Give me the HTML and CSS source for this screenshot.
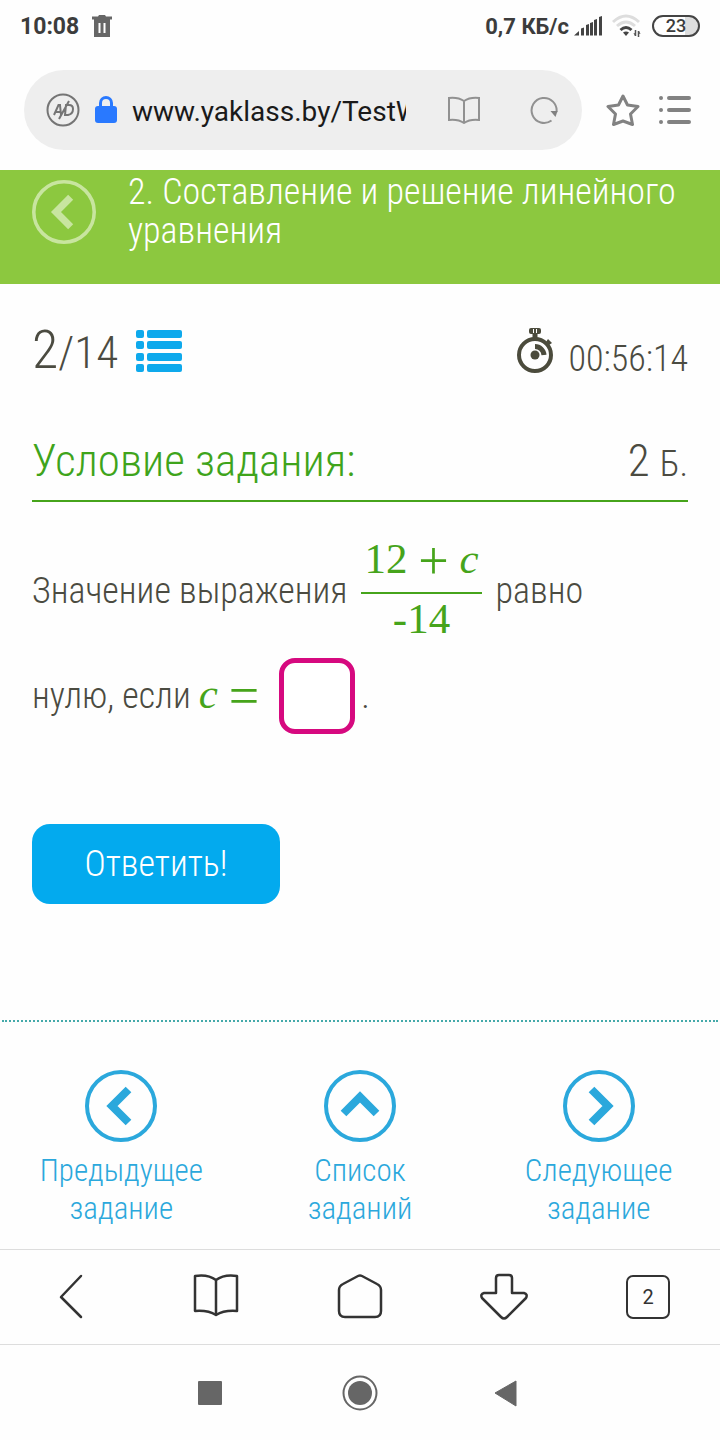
FILE: index.html
```html
<!DOCTYPE html>
<html lang="ru">

<head>
    <meta charset="UTF-8">
    <meta name="viewport" content="width=device-width, initial-scale=1">
    <title>ЯКласс</title>
    <link rel="stylesheet" href="styles.css">
</head>

<body>
    <div class="status-bar">
        <span>10:08</span>
        <svg class="trash" width="20" height="22" viewBox="0 0 20 22">
            <path d="M0 1.500h6l1-1.500h6l1 1.500h6v3H0zM2 4h16v18H2z" fill="#666" />
            <path d="M7.500 8v10M12.500 8v10" stroke="#fff" stroke-width="2" />
        </svg>
        <span class="speed">0,7 КБ/с</span>
        <svg class="signal" width="28" height="20" viewBox="0 0 28 20" fill="#444">
            <path d="M0 19.500L5 15v4.500zM7 12.500l3-1v8H7zM12 9l3-1v11.500h-3zM16 7l3-1v13.500h-3zM20 4l3-1v16.500h-3zM25 1l3-1v19.500h-3z" />
        </svg>
        <svg class="wifi" width="30" height="24" viewBox="0 0 30 24" fill="none" stroke-width="3">
            <path d="M1 8q13-12 26 0M5 12q9-8 18 0" stroke="#ddd" />
            <path d="M8.500 16q5.500-5 11 0" stroke="#444" />
            <path d="M11 18.500q3-2 6 0l-3 3.500z" fill="#444" />
            <path d="M23.500 16v6M26.500 17v6" stroke="#555" stroke-width="1.500" />
            <path d="M22 19l1.500 3M28 20l-1.500-3" stroke="#555" stroke-width="1" />
        </svg>
        <span class="battery">23</span>
    </div>

    <div class="browser-bar">
        <div class="address">
            <svg width="34" height="34" viewBox="0 0 34 34" fill="none" stroke="#757575" stroke-width="2">
                <circle cx="17" cy="17" r="15.500" />
                <path d="M8 22l4.500-10h1.500l1 10M9.500 19h6M20 12l-1 10h3q5-1 5-6q0-4-4-4zM23 8L13 26" />
            </svg>
            <svg class="lock" width="22" height="28" viewBox="0 0 22 28">
                <path d="M5.500 12V7a5.500 5.500 0 0 1 11 0v5" fill="none" stroke="#2979ff" stroke-width="3" />
                <rect y="10" width="22" height="17" rx="3" fill="#2979ff" />
            </svg>
            <input class="url" type="text" value="www.yaklass.by/TestWork" aria-label="Адрес">
            <button class="icon-btn" aria-label="Режим чтения">
                <svg width="32" height="28" viewBox="0 0 32 28" fill="none" stroke="#919191" stroke-width="2">
                    <path d="M1 2q9-1 15 3q6-4 15-3v22q-9-1-15 3q-6-4-15-3zM16 5v22" />
                </svg>
            </button>
            <button class="icon-btn reload" aria-label="Обновить">
                <svg width="28" height="28" viewBox="0 0 28 28">
                    <path d="M26.500 16a12.500 12.500 0 1 0-5 8.500" fill="none" stroke="#919191" stroke-width="2" />
                    <path d="M20.500 15h7l-2 6z" fill="#808080" />
                </svg>
            </button>
        </div>
        <button class="icon-btn" aria-label="В закладки">
            <svg width="34" height="34" viewBox="0 0 34 34" fill="none" stroke="#828282" stroke-width="3" stroke-linejoin="round">
                <path d="M17 3l4.500 9L32 13.500l-7.500 7.500L26.500 31.500L17 28L7.500 31.500L9.500 21L2 13.500L12.500 12z" />
            </svg>
        </button>
        <button class="icon-btn" aria-label="Меню">
            <svg width="34" height="30" viewBox="0 0 34 30" stroke="#828282" stroke-width="4" stroke-linecap="round">
                <path d="M3 3h0.010M3 15h0.010M3 27h0.010M11 3h20M11 15h20M11 27h20" />
            </svg>
        </button>
    </div>

    <header class="header">
        <a class="back" href="#" aria-label="Назад">
            <svg width="64" height="64" viewBox="0 0 72 72" fill="none" stroke="currentColor">
                <circle cx="36" cy="36" r="34" stroke-width="4" />
                <path d="M43.500 19.500L27 36L43.500 52.500" stroke-width="8" />
            </svg>
        </a>
        <h1>2. Составление и решение линейного уравнения</h1>
    </header>

    <main class="content">
        <div class="progress">
            <div class="counter"><span class="current">2</span>/14</div>
            <svg width="46" height="42" viewBox="0 0 46 42" fill="#0ea9ec">
                <rect width="8" height="8" rx="2" />
                <rect x="11" width="35" height="8" rx="2" />
                <rect y="11" width="8" height="8" rx="2" />
                <rect x="11" y="11" width="35" height="8" rx="2" />
                <rect y="23" width="8" height="8" rx="2" />
                <rect x="11" y="23" width="35" height="8" rx="2" />
                <rect y="34" width="8" height="8" rx="2" />
                <rect x="11" y="34" width="35" height="8" rx="2" />
            </svg>
            <div class="timer">
                <svg width="36" height="46" viewBox="0 0 36 46">
                    <circle cx="18" cy="27" r="16" fill="none" stroke="#4b4b3c" stroke-width="4" />
                    <path d="M15.500 5h5v6h-5zM29 14l2-3l4 4l-3 2z" fill="#4b4b3c" />
                    <rect x="12" y="0" width="12" height="6" rx="2" fill="#4b4b3c" />
                    <path d="M16.500 1v4M19.500 1v4" stroke="#fff" />
                    <circle cx="18" cy="27" r="4.500" fill="#4b4b3c" />
                    <path d="M18 18.500a9 9 0 0 1 9 8.500" fill="none" stroke="#4b4b3c" stroke-width="5" />
                </svg>
                <span class="time">00:56:14</span>
            </div>
        </div>

        <div class="task-head">
            <h2>Условие задания:</h2>
            <div class="points">2 <small>Б.</small></div>
        </div>

        <form class="task">
            <div class="task-line">
                <span>Значение выражения</span>
                <span class="fraction">
                    <span class="top">12 <span class="sign">+</span> <i>c</i></span>
                    <span class="bottom">-14</span>
                </span>
                <span>равно</span>
            </div>
            <div class="task-line second">
                <label for="answer">нулю, если <span class="math"><i>c</i> <span class="sign">=</span></span></label>
                <input class="answer" id="answer" type="text">
                <span>.</span>
            </div>
            <button class="submit" type="button">Ответить!</button>
        </form>
    </main>

    <nav class="task-nav">
        <a href="#">
            <svg width="72" height="72" viewBox="0 0 72 72" fill="none" stroke="currentColor">
                <circle cx="36" cy="36" r="34" stroke-width="4" />
                <path d="M43.500 19.500L27 36L43.500 52.500" stroke-width="8" />
            </svg>
            <span>Предыдущее задание</span>
        </a>
        <a href="#">
            <svg width="72" height="72" viewBox="0 0 72 72" fill="none" stroke="currentColor">
                <circle cx="36" cy="36" r="34" stroke-width="4" />
                <path d="M19.500 43.500L36 27L52.500 43.500" stroke-width="8" />
            </svg>
            <span>Список заданий</span>
        </a>
        <a href="#">
            <svg width="72" height="72" viewBox="0 0 72 72" fill="none" stroke="currentColor">
                <circle cx="36" cy="36" r="34" stroke-width="4" />
                <path d="M28.500 19.500L45 36L28.500 52.500" stroke-width="8" />
            </svg>
            <span>Следующее задание</span>
        </a>
    </nav>

    <div class="toolbar">
        <button aria-label="Назад">
            <svg width="48" height="48" viewBox="0 0 48 48">
                <path d="M33 3L13 24L33 44" />
            </svg>
        </button>
        <button aria-label="Закладки">
            <svg width="48" height="48" viewBox="0 0 48 48">
                <path d="M3 3q13-2 21 4q8-6 21-4v35q-13-1-21 4q-8-5-21-4zM24 7v35" />
            </svg>
        </button>
        <button aria-label="Домой">
            <svg width="48" height="48" viewBox="0 0 48 48">
                <path d="M22 3q2-1 4 0l15 8q4 2 4 6v21q0 6-6 6H9q-6 0-6-6V17q0-4 4-6z" />
            </svg>
        </button>
        <button aria-label="Загрузки">
            <svg width="48" height="48" viewBox="0 0 48 48">
                <path d="M16 20V5q0-3 3-3h10q3 0 3 3v15h12q4 1 2 5L27 44q-3 3-6 0L2 25q-2-4 2-5z" />
            </svg>
        </button>
        <button aria-label="Вкладки"><span class="tabs">2</span></button>
    </div>

    <div class="system-nav">
        <button aria-label="Недавние">
            <svg width="36" height="36" viewBox="0 0 36 36">
                <rect x="6" y="6" width="24" height="24" rx="1" fill="#666" />
            </svg>
        </button>
        <button aria-label="Главный экран">
            <svg width="36" height="36" viewBox="0 0 36 36">
                <circle cx="18" cy="18" r="16.500" fill="none" stroke="#666" stroke-width="2" />
                <circle cx="18" cy="18" r="12" fill="#666" />
            </svg>
        </button>
        <button aria-label="Назад">
            <svg width="36" height="36" viewBox="0 0 36 36">
                <path d="M3 18L24 6v25z" fill="#666" stroke="#666" stroke-linejoin="round" />
            </svg>
        </button>
    </div>
</body>

</html>
```
FILE: styles.css
```css
* {
    box-sizing: border-box;
}

body {
    display: flex;
    flex-direction: column;
    min-height: 100vh;
    margin: 0;
    background-color: #fefefe;
    color: #4b4b41;
    font-family: "Roboto Condensed", "Liberation Sans Narrow", Roboto, sans-serif;
    font-size: 36px;
    font-weight: 300;
}

svg {
    display: block;
    flex-shrink: 0;
}

button {
    padding: 0;
    border: 0;
    background: none;
    font-family: inherit;
    font-weight: inherit;
}

a {
    text-decoration: none;
}

h1,
h2 {
    margin: 0;
    font-weight: 300;
}

.status-bar {
    display: flex;
    align-items: center;
    height: 50px;
    padding: 2px 20px 0;
    color: #3c3c3c;
    font-family: Roboto, sans-serif;
    font-size: 23px;
    font-weight: 700;
}

.trash {
    margin-left: 13px;
}

.speed {
    margin-left: auto;
    font-size: 22px;
}

.signal {
    margin-left: 5px;
}

.wifi {
    margin: 0 10px;
}

.battery {
    width: 48px;
    height: 22px;
    border: 2px solid #444;
    border-radius: 11px;
    background: linear-gradient(90deg, #fff 70%, #ddd 70%);
    font-size: 18px;
    font-weight: 500;
    line-height: 18px;
    text-align: center;
}

.browser-bar {
    display: flex;
    align-items: center;
    gap: 18px;
    height: 120px;
    padding: 0 28px 0 24px;
}

.address {
    display: flex;
    flex: 1;
    align-items: center;
    min-width: 0;
    height: 80px;
    margin-right: 6px;
    padding: 0 24px 0 22px;
    border-radius: 40px;
    background-color: #eee;
}

.lock {
    margin: 0 15px;
}

.url {
    flex: 1;
    min-width: 0;
    margin-right: 42px;
    padding: 2px 0 0;
    border: 0;
    background: none;
    color: #1a1a1a;
    font-family: Roboto, sans-serif;
    font-size: 28px;
}

.reload {
    margin-left: 50px;
}

.header {
    display: flex;
    gap: 32px;
    padding: 3px 32px 33px;
    background-color: #8cc83f;
}

.header h1 {
    color: #fff;
    font-size: 36px;
    line-height: 39px;
}

.back {
    height: 77px;
    padding-top: 7px;
    color: #c8e59f;
}

.content {
    flex: 1;
    padding: 31px 32px 0;
}

.progress {
    display: flex;
    align-items: center;
    gap: 18px;
    height: 72px;
}

.counter {
    font-size: 45px;
    line-height: 72px;
}

.current {
    font-size: 54px;
}

.timer {
    display: flex;
    align-items: center;
    gap: 15px;
    margin-left: auto;
}

.time {
    padding-top: 15px;
}

.task-head {
    display: flex;
    align-items: baseline;
    justify-content: space-between;
    margin-top: 47px;
    padding-bottom: 9px;
    border-bottom: 2px solid #46a41b;
    font-size: 45px;
    line-height: 54px;
}

.task-head h2 {
    color: #3fa41b;
    font-size: 45px;
}

.points small {
    font-size: 36px;
}

.task-line {
    display: flex;
    align-items: center;
    margin-top: 34px;
    line-height: 36px;
}

.second {
    margin-top: 12px;
}

.fraction {
    display: flex;
    flex-direction: column;
    margin: 0 14px;
    padding-bottom: 4px;
    text-align: center;
}

.fraction,
.math {
    color: #46a41b;
    font-family: "Liberation Serif", serif;
    font-size: 43px;
    font-weight: 400;
}

.math {
    line-height: 0;
}

.top {
    padding: 0 3px 10px;
    border-bottom: 2px solid #46a41b;
    line-height: 46px;
}

.bottom {
    padding-top: 2px;
    line-height: 46px;
}

.sign {
    font-size: 54px;
    line-height: 0;
    vertical-align: -6px;
}

.answer {
    width: 76px;
    height: 76px;
    margin: 0 6px 0 20px;
    padding: 0 8px;
    border: 5px solid #d6097f;
    border-radius: 16px;
    background-color: #fff;
    color: inherit;
    font: inherit;
}

.submit {
    width: 248px;
    height: 80px;
    margin-top: 90px;
    border-radius: 18px;
    background-color: #03aaee;
    color: #fff;
    font-size: 36px;
}

.task-nav {
    display: grid;
    grid-template-columns: repeat(3, 1fr);
    justify-items: center;
    margin: 0 2px;
    padding: 48px 0 21px;
    border-top: 2px dotted #4aa;
    font-size: 31px;
    line-height: 38px;
}

.task-nav a {
    display: flex;
    flex-direction: column;
    align-items: center;
    gap: 10px;
    width: 180px;
    color: #2ba8dc;
    text-align: center;
}

.toolbar {
    display: flex;
    align-items: center;
    justify-content: space-around;
    height: 96px;
    border-top: 1px solid #ddd;
    border-bottom: 1px solid #ddd;
}

.toolbar button {
    width: 48px;
}

.toolbar svg {
    fill: none;
    stroke: #333;
    stroke-width: 2.5;
    stroke-linecap: round;
    stroke-linejoin: round;
}

.tabs {
    display: block;
    width: 44px;
    height: 44px;
    margin: 0 auto;
    border: 2px solid #333;
    border-radius: 7px;
    color: #333;
    font-family: Roboto, sans-serif;
    font-size: 20px;
    font-weight: 400;
    line-height: 40px;
}

.system-nav {
    display: flex;
    align-items: center;
    justify-content: center;
    gap: 114px;
    height: 95px;
}
```
